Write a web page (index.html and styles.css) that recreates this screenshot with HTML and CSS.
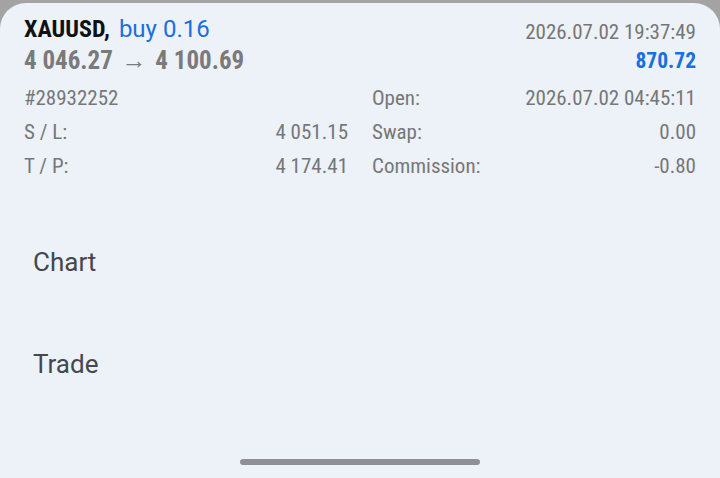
FILE: index.html
```html
<!DOCTYPE html>
<html lang="en">
<head>
    <meta charset="UTF-8">
    <meta name="viewport" content="width=device-width, initial-scale=1.0">
    <title>Position XAUUSD</title>
    <link rel="stylesheet" href="styles.css">
</head>
<body>

    <div class="sheet">
        <div class="header">
            <div class="title">
                <span class="symbol">XAUUSD,</span> <span class="side">buy 0.16</span>
            </div>
            <div class="time">2026.07.02 19:37:49</div>
            <div class="prices">4 046.27 <span class="arrow">&rarr;</span> 4 100.69</div>
            <div class="profit">870.72</div>
        </div>

        <div class="details">
            <div class="cell"><span>#28932252</span></div>
            <div class="cell"><span>Open:</span><span>2026.07.02 04:45:11</span></div>
            <div class="cell"><span>S / L:</span><span>4 051.15</span></div>
            <div class="cell"><span>Swap:</span><span>0.00</span></div>
            <div class="cell"><span>T / P:</span><span>4 174.41</span></div>
            <div class="cell"><span>Commission:</span><span>-0.80</span></div>
        </div>

        <ul class="menu">
            <li>Chart</li>
            <li>Trade</li>
        </ul>

        <div class="home-bar"></div>
    </div>

</body>
</html>
```

FILE: styles.css
```css
body {
    font-family: Roboto, "Noto Sans", sans-serif;
    margin: 0;
    padding: 0;
    background-color: #a3a3a3;
    width: 720px;
    height: 478px;
    overflow: hidden;
}

.sheet {
    margin-top: 3px;
    height: 475px;
    background: #edf1f8;
    border-radius: 26px 26px 0 0;
    padding: 10px 24px 0;
    box-sizing: border-box;
}

/* top block: symbol + time, prices + profit */
.header {
    display: grid;
    grid-template-columns: 1fr auto;
    grid-template-rows: 32px 31px;
}

.title {
    font-size: 24px;
    line-height: 32px;
}

.symbol {
    color: #111;
    font-weight: bold;
    font-stretch: 83%;
}

.side {
    color: #1670de;
    font-stretch: 90%;
    margin-left: 3px;
}

.time {
    font-size: 21px;
    line-height: 32px;
    margin-top: 3px;
    color: #767676;
    font-stretch: 82%;
    text-align: right;
}

.prices {
    font-size: 25px;
    font-weight: bold;
    font-stretch: 87.5%;
    color: #7a7a7a;
    line-height: 32px;
}

.arrow {
    margin: 0 3px;
}

.profit {
    font-size: 21.5px;
    font-weight: bold;
    font-stretch: 87.5%;
    color: #1670de;
    line-height: 32px;
    text-align: right;
}

.details {
    display: grid;
    grid-template-columns: 324px 324px;
    column-gap: 24px;
    margin-top: 5px;
    font-size: 21px;
    font-stretch: 80%;
    color: #777;
}

.cell {
    display: flex;
    justify-content: space-between;
    height: 34px;
    line-height: 34px;
}

.menu {
    list-style: none;
    padding: 0;
    margin: 59px 0 0 9px;
}

.menu li {
    font-size: 26px;
    color: #45474d;
    height: 102px;
    line-height: 40px;
}

.home-bar {
    width: 240px;
    height: 6px;
    border-radius: 3px;
    background: #8e9096;
    margin: 13px auto 0;
}
```
